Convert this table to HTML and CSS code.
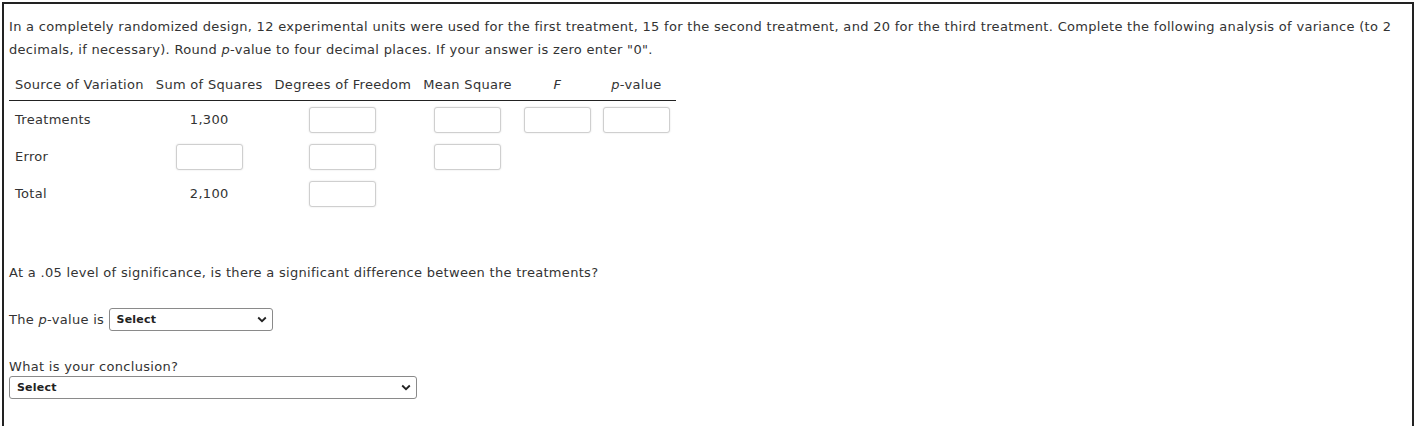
FILE: index.html
```html
<!DOCTYPE html>
<html>
<head>
<meta charset="utf-8">
<link rel="stylesheet" href="styles.css">
</head>
<body>
<div class="frame">
  <p class="intro">In a completely randomized design, 12 experimental units were used for the first treatment, 15 for the second treatment, and 20 for the third treatment. Complete the following analysis of variance (to 2 decimals, if necessary). Round <i>p</i>-value to four decimal places. If your answer is zero enter "0".</p>
  <table class="anova">
    <thead>
      <tr>
        <th class="left">Source of Variation</th>
        <th>Sum of Squares</th>
        <th>Degrees of Freedom</th>
        <th>Mean Square</th>
        <th><i>F</i></th>
        <th><i>p</i>-value</th>
      </tr>
    </thead>
    <tbody>
      <tr>
        <td class="left">Treatments</td>
        <td>1,300</td>
        <td><input class="box" type="text"></td>
        <td><input class="box" type="text"></td>
        <td><input class="box" type="text"></td>
        <td><input class="box" type="text"></td>
      </tr>
      <tr>
        <td class="left">Error</td>
        <td><input class="box" type="text"></td>
        <td><input class="box" type="text"></td>
        <td><input class="box" type="text"></td>
        <td></td>
        <td></td>
      </tr>
      <tr>
        <td class="left">Total</td>
        <td>2,100</td>
        <td><input class="box" type="text"></td>
        <td></td>
        <td></td>
        <td></td>
      </tr>
    </tbody>
  </table>
  <p class="question">At a .05 level of significance, is there a significant difference between the treatments?</p>
  <div class="pline">The <i>p</i>-value is <span class="sel sel-short"><span class="sel-text">Select</span><svg class="chev" width="10" height="7" viewBox="0 0 10 7"><path d="M1.2 1.5 L5 5.2 L8.8 1.5" fill="none" stroke="#222" stroke-width="1.8"/></svg></span></div>
  <div class="concl">What is your conclusion?</div>
  <div class="sel sel-long"><span class="sel-text">Select</span><svg class="chev" width="10" height="7" viewBox="0 0 10 7"><path d="M1.2 1.5 L5 5.2 L8.8 1.5" fill="none" stroke="#222" stroke-width="1.8"/></svg></div>
</div>
</body>
</html>
```
FILE: styles.css
```css
html, body {
  margin: 0;
  padding: 0;
  background: #fff;
  overflow: hidden;
}
body {
  font-family: "DejaVu Sans", Verdana, sans-serif;
  font-size: 13px;
  letter-spacing: 0.3px;
  color: #333;
}
.frame {
  box-sizing: border-box;
  margin: 2px 0 0 2px;
  width: 1412px;
  height: 424px;
  border: 2px solid #222;
  border-bottom: none;
  padding: 11px 0 0 5px;
}
.intro {
  margin: 0;
  line-height: 23px;
  width: 1398px;
}
.anova {
  border-collapse: collapse;
  margin-top: 8px;
}
.anova th {
  font-weight: normal;
  padding: 0 6px;
  height: 31px;
  text-align: center;
  border-bottom: 1px solid #222;
  white-space: nowrap;
}
.anova td {
  padding: 0 6px;
  height: 37px;
  text-align: center;
  white-space: nowrap;
}
.anova .left {
  text-align: left;
}
.box {
  display: block;
  margin: 0 auto;
  box-sizing: border-box;
  width: 67px;
  height: 26px;
  border: 1px solid #cfcfcf;
  border-radius: 3px;
  box-shadow: 0 0 2px rgba(0,0,0,0.12);
  background: #fff;
}
.question {
  margin: 53px 0 0 0;
}
.pline {
  margin-top: 27px;
  height: 26px;
  line-height: 26px;
}
.pline .sel {
  vertical-align: middle;
  margin-top: -2px;
}
.sel {
  box-sizing: border-box;
  display: inline-flex;
  align-items: center;
  justify-content: space-between;
  height: 23px;
  border: 1px solid #8a8a8a;
  border-radius: 3px;
  padding: 0 5px 0 7px;
  font-size: 11px;
  font-weight: bold;
  letter-spacing: 0.2px;
  color: #222;
  background: #fff;
  line-height: normal;
}
.sel-short {
  width: 164px;
}
.sel-long {
  width: 408px;
  margin-top: 2px;
}
.concl {
  margin-top: 26px;
}
.chev {
  display: block;
}
```
